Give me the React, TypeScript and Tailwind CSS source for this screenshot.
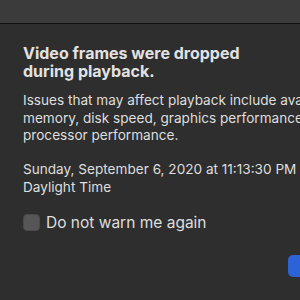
export default function App() {
  return (
    <div className="w-[300px] h-[300px] overflow-hidden bg-[#2e2e2e] font-['Inter',sans-serif] text-[#dedede]">
      <div className="h-[24px] bg-[#3b3b3b] border-b border-[#111111]" />
      <div className="pl-[23px] pt-[20px] w-[420px]">
        <div className="text-[16px] leading-[18px] font-bold text-[#e2e2e2]">
          Video frames were dropped
          <br />
          during playback.
        </div>
        <div className="mt-[12px] text-[13.6px] leading-[17.5px] whitespace-nowrap">
          Issues that may affect playback include available
          <br />
          memory, disk speed, graphics performance, and
          <br />
          processor performance.
        </div>
        <div className="mt-[16.5px] text-[13.6px] leading-[17.5px] whitespace-nowrap">
          Sunday, September 6, 2020 at 11:13:30 PM Pacific
          <br />
          Daylight Time
        </div>
        <div className="mt-[16.5px] flex items-center gap-[6px]">
          <div className="w-[17px] h-[17px] rounded-[4px] bg-[#565656] border border-[#4a4a4a]" />
          <span className="text-[15.5px] leading-[20px]">Do not warn me again</span>
        </div>
        <div className="mt-[22.5px] flex">
          <div className="ml-[265px] w-[80px] h-[22px] rounded-[5px] bg-[#2c64d8]" />
        </div>
      </div>
    </div>
  );
}
